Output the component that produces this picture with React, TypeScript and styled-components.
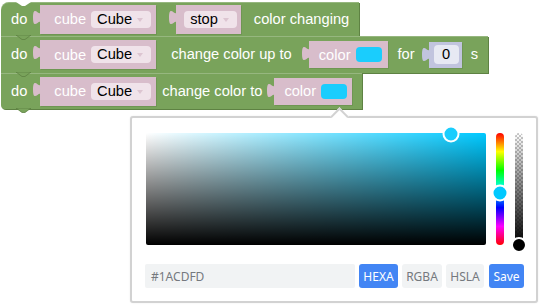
import styled, { createGlobalStyle } from 'styled-components';

const GREEN = '#79a35b';
const GREEN_DARK = '#5e8243';
const PINK = '#d8bdcb';
const LAVENDER = '#c1c4de';
const SWATCH = '#1acdfd';

const GlobalStyle = createGlobalStyle`
  html, body {
    margin: 0;
    padding: 0;
    background: #fff;
  }
`;

const Workspace = styled.div`
  position: relative;
  width: 541px;
  height: 306px;
  overflow: hidden;
  background: #fff;
`;

const Stack = styled.div`
  display: flex;
  flex-direction: column;
  align-items: flex-start;
  padding: 2px 0 0 1px;
`;

const Statement = styled.div<{ $h: number; $first?: boolean; $last?: boolean }>`
  position: relative;
  display: flex;
  align-items: center;
  box-sizing: border-box;
  height: ${(p) => p.$h}px;
  padding: 0 10px 0 10px;
  background: ${GREEN};
  border-top-left-radius: ${(p) => (p.$first ? 8 : 0)}px;
  border-bottom-left-radius: ${(p) => (p.$last ? 4 : 0)}px;
  box-shadow: inset 0 1px 0 rgba(255, 255, 255, 0.22), 1px 1px 0 ${GREEN_DARK};
  font: 14.67px 'Liberation Sans', Arial, sans-serif;
  color: #fff;
  white-space: nowrap;
`;

const NotchSvg = styled.svg<{ $bottom?: boolean }>`
  position: absolute;
  left: 15px;
  ${(p) => (p.$bottom ? 'bottom: -4px;' : 'top: 0;')}
  z-index: 2;
`;

const Label = styled.span<{ $ml?: number }>`
  margin-left: ${(p) => p.$ml ?? 0}px;
  line-height: 1;
`;

const ValueBlock = styled.div<{ $bg: string; $h: number; $ml: number; $pad: string }>`
  position: relative;
  display: flex;
  align-items: center;
  gap: 5px;
  box-sizing: border-box;
  height: ${(p) => p.$h}px;
  margin-left: ${(p) => p.$ml}px;
  padding: ${(p) => p.$pad};
  background: ${(p) => p.$bg};
  box-shadow: 1px 1px 0 rgba(0, 0, 0, 0.08);
`;

const TabSvg = styled.svg`
  position: absolute;
  left: -7px;
  top: 5px;
`;

const Dropdown = styled.span`
  display: inline-flex;
  align-items: center;
  gap: 5px;
  height: 17px;
  padding: 0 8px 0 6px;
  border-radius: 4px;
  background: #f0e3ea;
  color: #000;
  line-height: 1;
`;

const Caret = styled.span`
  width: 0;
  height: 0;
  border-left: 3.5px solid transparent;
  border-right: 3.5px solid transparent;
  border-top: 4px solid #dcc5d1;
  margin-top: 1px;
`;

const Swatch = styled.span`
  width: 26px;
  height: 15px;
  border-radius: 4px;
  background: ${SWATCH};
`;

const NumberField = styled.span`
  display: inline-flex;
  align-items: center;
  justify-content: center;
  width: 25px;
  height: 19px;
  border-radius: 4px;
  background: #e7e9f3;
  color: #000;
  line-height: 1;
`;

/* ---------- colour picker dropdown ---------- */

const Popup = styled.div`
  position: absolute;
  left: 130px;
  top: 116px;
  z-index: 5;
  box-sizing: border-box;
  width: 408px;
  height: 187px;
  padding: 15px 13px 13px 14px;
  background: #fff;
  border: 2px solid #d2d2d2;
  border-radius: 3px;
  box-shadow: 0 0 2px rgba(0, 0, 0, 0.08);
  display: flex;
  flex-direction: column;
  gap: 19px;
  font-family: 'Noto Sans', 'Open Sans', sans-serif;
`;

const Arrow = styled.div`
  position: absolute;
  left: 201px;
  top: -8px;
  width: 11px;
  height: 11px;
  background: #fff;
  border-top: 2px solid #d2d2d2;
  border-left: 2px solid #d2d2d2;
  transform: rotate(45deg);
`;

const Selection = styled.div`
  display: flex;
  height: 112px;
`;

const Palette = styled.div<{ $hue: string }>`
  position: relative;
  flex: 1;
  border-radius: 2px;
  background: linear-gradient(to top, #000, rgba(0, 0, 0, 0)),
    linear-gradient(to right, #fff, rgba(255, 255, 255, 0)), ${(p) => p.$hue};
`;

const Slider = styled.div<{ $ml: number; $alpha?: boolean }>`
  position: relative;
  width: 8px;
  margin-left: ${(p) => p.$ml}px;
  border-radius: 50em;
  background: ${(p) =>
    p.$alpha
      ? 'linear-gradient(to bottom, rgba(0,0,0,0), #000), repeating-conic-gradient(#c8c8c8 0 25%, #fff 0 50%) 0 0 / 4px 4px'
      : 'linear-gradient(to bottom, red, #ff0, lime, cyan, blue, #f0f, red)'};
`;

const Handle = styled.div<{ $color: string; $size: number }>`
  position: absolute;
  width: ${(p) => p.$size}px;
  height: ${(p) => p.$size}px;
  box-sizing: border-box;
  border: 2px solid #fff;
  border-radius: 50%;
  background: ${(p) => p.$color};
  transform: translate(-50%, -50%);
`;

const Interaction = styled.div`
  display: flex;
  gap: 4px;
  height: 24px;
  margin-left: -1px;
  margin-right: -1px;
`;

const Result = styled.div`
  flex: 1;
  display: flex;
  align-items: center;
  padding-left: 6px;
  border-radius: 2px;
  background: #f1f3f4;
  color: #75797e;
  font-size: 12px;
`;

const TypeButton = styled.div<{ $active?: boolean; $w: number; $ml?: number }>`
  display: flex;
  align-items: center;
  justify-content: center;
  width: ${(p) => p.$w}px;
  margin-left: ${(p) => p.$ml ?? 0}px;
  border-radius: 3px;
  background: ${(p) => (p.$active ? '#4285f4' : '#f1f3f4')};
  color: ${(p) => (p.$active ? '#fff' : '#75797e')};
  font-size: 12px;
`;

const Tab = ({ color }: { color: string }) => (
  <TabSvg width="8" height="15" viewBox="0 0 8 15">
    <path d="M8 0c0 10-8-8-8 7.5s8-2.5 8 7.5z" fill={color} />
  </TabSvg>
);

const Notch = ({ bottom }: { bottom?: boolean }) => (
  <NotchSvg $bottom={bottom} width="15" height="5" viewBox="0 0 15 5">
    {bottom ? (
      <path d="M0 0l6 4.5h3l6-4.5z" fill={GREEN} stroke={GREEN_DARK} strokeWidth="0.8" />
    ) : (
      <path d="M0 0l6 4h3l6-4z" fill="#fff" />
    )}
  </NotchSvg>
);

const CubeBlock = () => (
  <ValueBlock $bg={PINK} $h={29} $ml={13} $pad="0 5px 0 14px">
    <Tab color={PINK} />
    <span>cube</span>
    <Dropdown>
      Cube
      <Caret />
    </Dropdown>
  </ValueBlock>
);

const ColorBlock = ({ ml, pr }: { ml: number; pr: number }) => (
  <ValueBlock $bg={PINK} $h={27} $ml={ml} $pad={`0 ${pr}px 0 10px`}>
    <Tab color={PINK} />
    <span>color</span>
    <Swatch />
  </ValueBlock>
);

// #1ACDFD in hsv
const hue = 192.7;
const sat = 0.897;
const val = 0.992;

export default function App() {
  return (
    <Workspace>
      <GlobalStyle />
      <Stack>
        <Statement $h={34} $first>
          <Notch />
          <Label>do</Label>
          <CubeBlock />
          <ValueBlock $bg={PINK} $h={29} $ml={20} $pad="0 4px 0 8px">
            <Tab color={PINK} />
            <Dropdown>
              stop
              <Caret />
            </Dropdown>
          </ValueBlock>
          <Label $ml={13}>color changing</Label>
          <Notch bottom />
        </Statement>

        <Statement $h={37}>
          <Label>do</Label>
          <CubeBlock />
          <Label $ml={15}>change color up to</Label>
          <ColorBlock ml={17} pr={6} />
          <Label $ml={10}>for</Label>
          <ValueBlock $bg={LAVENDER} $h={26} $ml={14} $pad="0 3px 0 5px">
            <Tab color={LAVENDER} />
            <NumberField>0</NumberField>
          </ValueBlock>
          <Label $ml={9}>s</Label>
          <Notch bottom />
        </Statement>

        <Statement $h={36} $last>
          <Label>do</Label>
          <CubeBlock />
          <Label $ml={6}>change color to</Label>
          <ColorBlock ml={12} pr={5} />
          <Notch bottom />
        </Statement>
      </Stack>

      <Popup>
        <Arrow />
        <Selection>
          <Palette $hue={`hsl(${hue}, 100%, 50%)`}>
            <Handle
              $color={SWATCH}
              $size={17}
              style={{ left: `${sat * 100}%`, top: `${(1 - val) * 100}%` }}
            />
          </Palette>
          <Slider $ml={10}>
            <Handle $color={`hsl(${hue}, 100%, 50%)`} $size={17} style={{ left: '50%', top: `${(hue / 360) * 100}%` }} />
          </Slider>
          <Slider $ml={11} $alpha>
            <Handle $color="#000" $size={16} style={{ left: '50%', top: '100%' }} />
          </Slider>
        </Selection>
        <Interaction>
          <Result>#1ACDFD</Result>
          <TypeButton $active $w={39}>HEXA</TypeButton>
          <TypeButton $w={40}>RGBA</TypeButton>
          <TypeButton $w={38}>HSLA</TypeButton>
          <TypeButton $active $w={35} $ml={1}>Save</TypeButton>
        </Interaction>
      </Popup>
    </Workspace>
  );
}
